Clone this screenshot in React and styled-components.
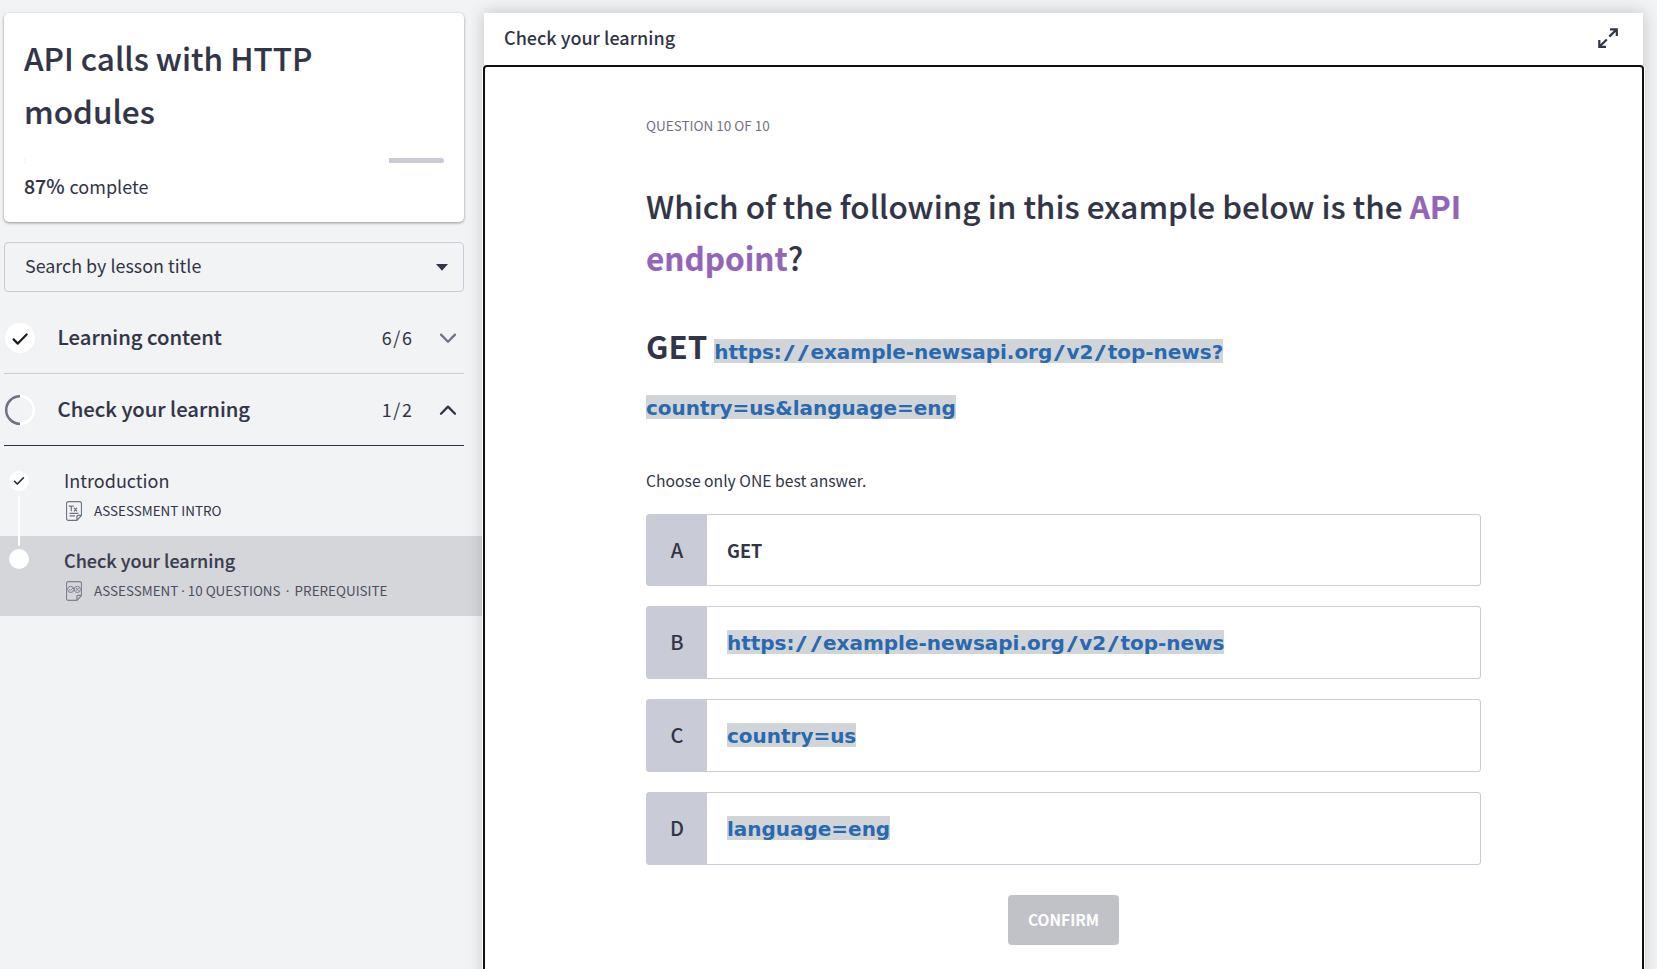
import React from 'react';
import styled, { createGlobalStyle, css } from 'styled-components';

const ink = '#313547';
const line = '#c9cbd6';
const sans = '"Noto Sans CJK SC", "Noto Sans", sans-serif';

const GlobalStyle = createGlobalStyle`
  *, *::before, *::after { box-sizing: border-box; }
  body {
    margin: 0;
    background: #f1f3f5;
    color: ${ink};
    font-family: ${sans};
    overflow: hidden;
  }
  h1, h2, h3, p { margin: 0; font-weight: 500; }
  svg { display: block; flex: none; }
`;

/* nudges the medium weight towards semibold */
const semibold = css`
  font-weight: 500;
  -webkit-text-stroke: 0.15px currentColor;
`;

const Page = styled.div`
  display: flex;
  width: 1657px;
  height: 969px;
  padding-top: 13px;
  overflow: hidden;
`;

/* ---------- sidebar ---------- */

const Sidebar = styled.aside`
  flex: none;
  width: 484px;
`;

const CourseCard = styled.section`
  width: 460px;
  height: 209px;
  margin-left: 4px;
  padding: 18px 20px 0;
  background: #fff;
  border-radius: 5px;
  box-shadow: 0 1px 3px rgba(0, 0, 0, 0.4);
`;

const CourseTitle = styled.h1`
  ${semibold}
  font-size: 31.5px;
  line-height: 53px;
`;

const ProgressTrack = styled.div`
  height: 5px;
  margin-top: 21px;
  border-radius: 3px;
  background: ${line};
  overflow: hidden;
`;

const ProgressFill = styled.div`
  height: 100%;
  background: #fff;
`;

const ProgressLabel = styled.p`
  margin-top: 9px;
  font-size: 18px;
  font-weight: 400;
  line-height: 28px;
`;

const Percent = styled.span`
  ${semibold}
  margin-right: 1px;
  font-size: 19.5px;
  line-height: 1;
`;

const SearchSelect = styled.div`
  display: flex;
  align-items: center;
  justify-content: space-between;
  width: 460px;
  height: 50px;
  margin: 20px 0 10px 4px;
  padding: 0 15px 0 20px;
  border: 1px solid ${line};
  border-radius: 4px;
  font-size: 17.9px;
  line-height: 26px;
`;

const SearchText = styled.span`
  padding-bottom: 4px;
`;

const SectionRow = styled.div`
  display: flex;
  align-items: center;
  width: 460px;
  height: 72px;
  margin-left: 4px;
  padding-right: 7px;
  border-bottom: 1px solid ${p => (p.$open ? '#35304f' : line)};
`;

const SectionTitle = styled.h2`
  ${semibold}
  flex: 1;
  padding: 0 0 1px 21.6px;
  font-size: 20.25px;
  line-height: 28px;
`;

const Count = styled.span`
  margin-right: 25.5px;
  padding-bottom: 1px;
  font-size: 18px;
  line-height: 26px;
  letter-spacing: 1.6px;
`;

const LessonList = styled.div`
  position: relative;
  padding-top: 10px;
`;

const Rail = styled.div`
  position: absolute;
  left: 18px;
  top: 50px;
  width: 2px;
  height: 50px;
  border-radius: 1px;
  background: #fff;
`;

const Lesson = styled.div`
  display: flex;
  height: 80px;
  padding-left: 9px;
  ${p => p.$active && css`background: #d5d6da;`}
`;

const Marker = styled.div`
  display: flex;
  align-items: center;
  justify-content: center;
  width: 20px;
  height: 20px;
  margin-top: ${p => (p.$done ? 15 : 13)}px;
  border-radius: 50%;
  background: #fff;
`;

const LessonBody = styled.div`
  padding: 11px 0 0 35px;
  opacity: ${p => (p.$active ? 0.95 : 1)};
`;

const LessonTitle = styled.h3`
  font-size: 18px;
  line-height: 26px;
  ${p => (p.$active ? semibold : css`font-weight: 400;`)}
`;

const LessonMeta = styled.div`
  display: flex;
  align-items: center;
  gap: 12px;
  margin-top: 6px;
  padding-left: 2px;
  font-size: 13.45px;
  line-height: 20px;
  white-space: pre;
  opacity: ${p => (p.$active ? 0.88 : 1)};
  svg { margin-top: 2px; }
`;

const Dot = styled.span`
  font-family: "Noto Sans", sans-serif;
  line-height: 1;
  margin: 0 ${p => p.$gap || 0}px;
`;

/* ---------- lesson panel ---------- */

const Panel = styled.main`
  position: relative;
  flex: none;
  width: 1159px;
  height: 1100px;
  background: #fff;
  box-shadow: 0 0 16px rgba(0, 0, 0, 0.2);
`;

const PanelHeader = styled.header`
  display: flex;
  align-items: center;
  justify-content: space-between;
  height: 52px;
  padding: 0 24px 3px 20px;
`;

const PanelTitle = styled.h2`
  font-size: 18px;
  line-height: 26px;
  padding-bottom: 2px;
`;

const Frame = styled.section`
  display: flex;
  flex-direction: column;
  align-items: center;
  height: 1048px;
  margin: 0 -1px;
  padding-top: 48px;
  border: 2px solid #101010;
  border-radius: 4px;
  background: #fff;
  box-shadow: 0 0 0 1px #fff;
`;

const Quiz = styled.div`
  display: flex;
  flex-direction: column;
  width: 835px;
`;

const Progress = styled.p`
  color: #6f7285;
  font-size: 13.5px;
  font-weight: 400;
  line-height: 20px;
`;

const Question = styled.h1`
  ${semibold}
  margin-top: 44px;
  font-size: 31.47px;
  line-height: 52px;
  white-space: nowrap;
`;

const Term = styled.strong`
  color: #9365b8;
  font-weight: 700;
  -webkit-text-stroke: 0.2px currentColor;
`;

const Example = styled.p`
  margin-top: 35px;
  font-size: 31.3px;
  font-weight: 700;
  line-height: 56px;
`;

const Link = styled.span`
  padding-top: 1px;
  background: linear-gradient(#d1d5d8, #d1d5d8) 0 0 / 100% 24px no-repeat;
  color: #2969b0;
  font-family: "DejaVu Sans", sans-serif;
  font-size: 20px;
  font-weight: 700;
  line-height: 24px;
  letter-spacing: -0.02px;
  white-space: nowrap;
  box-decoration-break: clone;
  -webkit-box-decoration-break: clone;
`;

const Slash = styled.span`
  display: inline-block;
  padding: 0 3.5px;
  transform: scaleX(1.5);
`;

const Hint = styled.p`
  margin-top: 39px;
  font-size: 15.7px;
  font-weight: 400;
  line-height: 24px;
`;

const Options = styled.div`
  display: flex;
  flex-direction: column;
  gap: 20px;
  margin-top: 21px;
`;

const Option = styled.div`
  display: flex;
  height: ${p => (p.$plain ? 72 : 73)}px;
  border: 1px solid ${line};
  border-radius: 3px;
`;

const OptionKey = styled.div`
  display: flex;
  align-items: center;
  justify-content: center;
  width: 60px;
  padding-bottom: 1px;
  background: ${line};
  font-size: 20px;
  font-weight: 500;
  line-height: 28px;
`;

const OptionText = styled.div`
  display: flex;
  align-items: center;
  padding: 0 0 1px 20px;
  font-size: 18px;
  font-weight: 700;
  line-height: 26px;
`;

const Confirm = styled.button`
  align-self: center;
  width: 111px;
  height: 50px;
  margin-top: 30px;
  padding: 0 0 3px;
  border: 0;
  border-radius: 4px;
  background: #c1c2c8;
  color: #fff;
  font-family: ${sans};
  font-size: 15.5px;
  font-weight: 700;
  line-height: 24px;
`;

/* ---------- icons ---------- */

const SectionDone = () => (
  <svg width="32" height="32" viewBox="0 0 32 32" fill="none">
    <circle cx="16" cy="16" r="15" fill="#fff" />
    <path d="M9.6 17.4l4.2 4.2 8.8-9.2" stroke="#1c1c24" strokeWidth="2.2" strokeLinecap="round" strokeLinejoin="round" />
  </svg>
);

const SectionHalf = () => (
  <svg width="32" height="32" viewBox="0 0 32 32" fill="none">
    <path d="M16 2.2a13.8 13.8 0 0 1 0 27.6" stroke="#fff" strokeWidth="2.5" />
    <path d="M16 2.2a13.8 13.8 0 0 0 0 27.6" stroke="#6f7285" strokeWidth="2.5" />
  </svg>
);

const Tick = () => (
  <svg width="12" height="10" viewBox="0 0 12 10" fill="none">
    <path d="M1.5 5.3l2.8 2.7L10.5 1.8" stroke="#1c1c24" strokeWidth="1.5" strokeLinecap="round" strokeLinejoin="round" />
  </svg>
);

const Chevron = ({ up }) => (
  <svg width="18" height="12" viewBox="0 0 18 12" fill="none">
    <path
      d={up ? 'M2 9.8L9 2.6l7 7.2' : 'M2 2.6L9 9.8l7-7.2'}
      stroke={up ? ink : '#6f7285'}
      strokeWidth="2.3"
      strokeLinecap="round"
      strokeLinejoin="round"
    />
  </svg>
);

const Caret = () => (
  <svg width="12" height="7" viewBox="0 0 12 7">
    <path d="M0 0h12L6 6.8z" fill={ink} />
  </svg>
);

const Expand = () => (
  <svg width="22" height="22" viewBox="0 0 22 22" fill="none" stroke={ink} strokeWidth="2.2">
    <path d="M13 2.3H19.8V9M19.8 2.3l-7.5 7.3M2.3 13V19.8H9M2.3 19.8l7.5-7.3" />
  </svg>
);

const page = 'M2.5 0.6h11a2 2 0 0 1 2 2V14.4l-4.6 5H2.5a2 2 0 0 1-2-2V2.6a2 2 0 0 1 2-2zM15.5 14.4h-3.6a1 1 0 0 0-1 1v4';

const TextPage = () => (
  <svg width="16" height="20" viewBox="0 0 16 20" fill="none" stroke="#6f7285" strokeWidth="1.2">
    <path d={page} />
    <path d="M2.8 5.1h5M5.3 5.1v5.2M8 6.8l3 3.5M11 6.8l-3 3.5" strokeWidth="1.2" />
    <path d="M3.5 12.4h9M3.5 14.8h5.5" />
  </svg>
);

const QuizPage = () => (
  <svg width="16" height="20" viewBox="0 0 16 20" fill="none" stroke="#6f7285" strokeWidth="1.2">
    <path d={page} />
    <g strokeWidth="1">
      <circle cx="4.7" cy="8.4" r="3.1" />
      <circle cx="11.3" cy="8.4" r="3.1" />
      <path d="M3.2 8.5l1.2 1.1 2.6-2.7M9.9 7l2.8 2.8M12.7 7l-2.8 2.8" />
    </g>
  </svg>
);

/* ---------- content ---------- */

const Url = ({ children }) => (
  <Link>
    {children.split(/(\/)/).map((part, i) => (part === '/' ? <Slash key={i}>/</Slash> : part))}
  </Link>
);

const options = [
  { key: 'A', text: 'GET' },
  { key: 'B', url: 'https://example-newsapi.org/v2/top-news' },
  { key: 'C', url: 'country=us' },
  { key: 'D', url: 'language=eng' },
];

const percent = 87;

export default function App() {
  return (
    <Page>
      <GlobalStyle />
      <Sidebar>
        <CourseCard>
          <CourseTitle>API calls with HTTP<br />modules</CourseTitle>
          <ProgressTrack>
            <ProgressFill style={{ width: `${percent}%` }} />
          </ProgressTrack>
          <ProgressLabel><Percent>{percent}%</Percent> complete</ProgressLabel>
        </CourseCard>

        <SearchSelect>
          <SearchText>Search by lesson title</SearchText>
          <Caret />
        </SearchSelect>

        <SectionRow>
          <SectionDone />
          <SectionTitle>Learning content</SectionTitle>
          <Count>6/6</Count>
          <Chevron />
        </SectionRow>
        <SectionRow $open>
          <SectionHalf />
          <SectionTitle>Check your learning</SectionTitle>
          <Count>1/2</Count>
          <Chevron up />
        </SectionRow>

        <LessonList>
          <Lesson>
            <Marker $done><Tick /></Marker>
            <LessonBody>
              <LessonTitle>Introduction</LessonTitle>
              <LessonMeta><TextPage />ASSESSMENT INTRO</LessonMeta>
            </LessonBody>
          </Lesson>
          <Lesson $active>
            <Marker />
            <LessonBody $active>
              <LessonTitle $active>Check your learning</LessonTitle>
              <LessonMeta $active>
                <QuizPage />
                <span>ASSESSMENT<Dot $gap={2.9}>·</Dot>10 QUESTIONS<Dot $gap={5.2}>·</Dot>PREREQUISITE</span>
              </LessonMeta>
            </LessonBody>
          </Lesson>
          <Rail />
        </LessonList>
      </Sidebar>

      <Panel>
        <PanelHeader>
          <PanelTitle>Check your learning</PanelTitle>
          <Expand />
        </PanelHeader>
        <Frame>
          <Quiz>
            <Progress>QUESTION 10 OF 10</Progress>
            <Question>
              Which of the following in this example below is the <Term>API</Term>
              <br />
              <Term>endpoint</Term>?
            </Question>
            <Example>
              GET <Url>https://example-newsapi.org/v2/top-news?</Url>
              <br />
              <Url>country=us&language=eng</Url>
            </Example>
            <Hint>Choose only ONE best answer.</Hint>
            <Options>
              {options.map(o => (
                <Option key={o.key} $plain={!o.url}>
                  <OptionKey>{o.key}</OptionKey>
                  <OptionText>{o.url ? <Url>{o.url}</Url> : o.text}</OptionText>
                </Option>
              ))}
            </Options>
            <Confirm>CONFIRM</Confirm>
          </Quiz>
        </Frame>
      </Panel>
    </Page>
  );
}
